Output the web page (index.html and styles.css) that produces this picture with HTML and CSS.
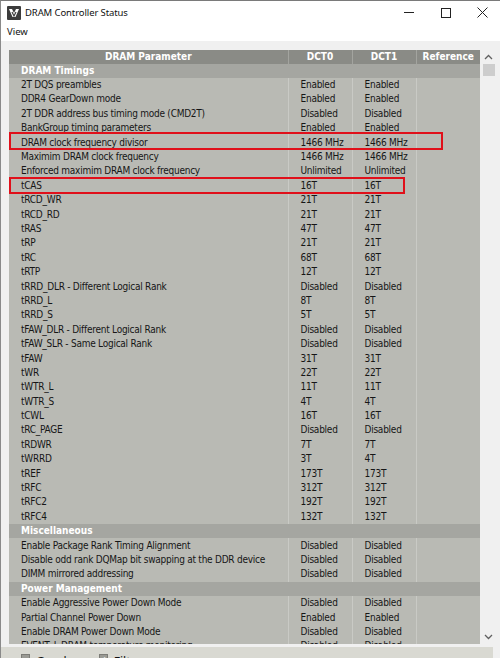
FILE: index.html
```html
<!DOCTYPE html>
<html lang="en">
<head>
  <meta charset="UTF-8">
  <title>DRAM Controller Status</title>
  <link rel="stylesheet" href="styles.css">
</head>
<body>

  <div class="window">
    <div class="titlebar">
      <svg class="app-icon" width="14" height="14" viewBox="0 0 14 14">
        <rect x="0" y="0" width="14" height="14" rx="1" fill="#3c3c3c"/>
        <path d="M2 3 L5 3 L7 7 L9 3 L12 3 L8.5 11 L5.5 11 Z" fill="#ffffff"/>
        <path d="M5 6 L7 10 L9 6" fill="none" stroke="#3c3c3c" stroke-width="1.2"/>
      </svg>
      <span class="title">DRAM Controller Status</span>
      <div class="controls">
        <span class="ctl"><span class="min-bar"></span></span>
        <span class="ctl"><span class="max-box"></span></span>
        <span class="ctl close">
          <svg width="11" height="11" viewBox="0 0 11 11">
            <path d="M0.5 0.5 L10.5 10.5 M10.5 0.5 L0.5 10.5" stroke="#222" stroke-width="1"/>
          </svg>
        </span>
      </div>
    </div>

    <div class="menubar"><span>View</span></div>

    <div class="client">
      <div class="grid-area">
        <div class="grid">
          <table class="params">
            <colgroup>
              <col class="c-name">
              <col class="c-val">
              <col class="c-val">
              <col class="c-val">
            </colgroup>
            <thead>
              <tr><th>DRAM Parameter</th><th>DCT0</th><th>DCT1</th><th>Reference</th></tr>
            </thead>
            <tbody>
              <tr class="group"><td colspan="4">DRAM Timings</td></tr>
              <tr><td>2T DQS preambles</td><td>Enabled</td><td>Enabled</td><td></td></tr>
              <tr><td>DDR4 GearDown mode</td><td>Enabled</td><td>Enabled</td><td></td></tr>
              <tr><td>2T DDR address bus timing mode (CMD2T)</td><td>Disabled</td><td>Disabled</td><td></td></tr>
              <tr><td>BankGroup timing parameters</td><td>Enabled</td><td>Enabled</td><td></td></tr>
              <tr><td>DRAM clock frequency divisor</td><td>1466 MHz</td><td>1466 MHz</td><td></td></tr>
              <tr><td>Maximim DRAM clock frequency</td><td>1466 MHz</td><td>1466 MHz</td><td></td></tr>
              <tr><td>Enforced maximim DRAM clock frequency</td><td>Unlimited</td><td>Unlimited</td><td></td></tr>
              <tr><td>tCAS</td><td>16T</td><td>16T</td><td></td></tr>
              <tr><td>tRCD_WR</td><td>21T</td><td>21T</td><td></td></tr>
              <tr><td>tRCD_RD</td><td>21T</td><td>21T</td><td></td></tr>
              <tr><td>tRAS</td><td>47T</td><td>47T</td><td></td></tr>
              <tr><td>tRP</td><td>21T</td><td>21T</td><td></td></tr>
              <tr><td>tRC</td><td>68T</td><td>68T</td><td></td></tr>
              <tr><td>tRTP</td><td>12T</td><td>12T</td><td></td></tr>
              <tr><td>tRRD_DLR - Different Logical Rank</td><td>Disabled</td><td>Disabled</td><td></td></tr>
              <tr><td>tRRD_L</td><td>8T</td><td>8T</td><td></td></tr>
              <tr><td>tRRD_S</td><td>5T</td><td>5T</td><td></td></tr>
              <tr><td>tFAW_DLR - Different Logical Rank</td><td>Disabled</td><td>Disabled</td><td></td></tr>
              <tr><td>tFAW_SLR - Same Logical Rank</td><td>Disabled</td><td>Disabled</td><td></td></tr>
              <tr><td>tFAW</td><td>31T</td><td>31T</td><td></td></tr>
              <tr><td>tWR</td><td>22T</td><td>22T</td><td></td></tr>
              <tr><td>tWTR_L</td><td>11T</td><td>11T</td><td></td></tr>
              <tr><td>tWTR_S</td><td>4T</td><td>4T</td><td></td></tr>
              <tr><td>tCWL</td><td>16T</td><td>16T</td><td></td></tr>
              <tr><td>tRC_PAGE</td><td>Disabled</td><td>Disabled</td><td></td></tr>
              <tr><td>tRDWR</td><td>7T</td><td>7T</td><td></td></tr>
              <tr><td>tWRRD</td><td>3T</td><td>4T</td><td></td></tr>
              <tr><td>tREF</td><td>173T</td><td>173T</td><td></td></tr>
              <tr><td>tRFC</td><td>312T</td><td>312T</td><td></td></tr>
              <tr><td>tRFC2</td><td>192T</td><td>192T</td><td></td></tr>
              <tr><td>tRFC4</td><td>132T</td><td>132T</td><td></td></tr>
              <tr class="group"><td colspan="4">Miscellaneous</td></tr>
              <tr><td>Enable Package Rank Timing Alignment</td><td>Disabled</td><td>Disabled</td><td></td></tr>
              <tr><td>Disable odd rank DQMap bit swapping at the DDR device</td><td>Disabled</td><td>Disabled</td><td></td></tr>
              <tr><td>DIMM mirrored addressing</td><td>Disabled</td><td>Disabled</td><td></td></tr>
              <tr class="group"><td colspan="4">Power Management</td></tr>
              <tr><td>Enable Aggressive Power Down Mode</td><td>Disabled</td><td>Disabled</td><td></td></tr>
              <tr><td>Partial Channel Power Down</td><td>Enabled</td><td>Enabled</td><td></td></tr>
              <tr><td>Enable DRAM Power Down Mode</td><td>Disabled</td><td>Disabled</td><td></td></tr>
              <tr><td>EVENT_L DRAM temperature monitoring</td><td>Disabled</td><td>Disabled</td><td></td></tr>
            </tbody>
          </table>

          <!-- highlight frames drawn over the grid -->
          <div class="mark mark-divisor"></div>
          <div class="mark mark-tcas"></div>
        </div>

        <div class="scrollbar">
          <svg class="arrow" width="9" height="14" viewBox="0 0 9 14">
            <path d="M1 9 L4.5 5.5 L8 9" fill="none" stroke="#606060" stroke-width="1.3"/>
          </svg>
          <span class="thumb"></span>
          <span class="track"></span>
          <svg class="arrow" width="9" height="14" viewBox="0 0 9 14">
            <path d="M1 5 L4.5 8.5 L8 5" fill="none" stroke="#606060" stroke-width="1.3"/>
          </svg>
        </div>
      </div>

      <div class="statusbar">
        <label class="opt"><span class="box"></span>Graphs</label>
        <label class="opt"><span class="box checked">&#x2713;</span>Filter</label>
      </div>
    </div>
  </div>

</body>
</html>
```

FILE: styles.css
```css
* {
  box-sizing: border-box;
}

body {
  margin: 0;
  background-color: #f0f0f0;
  overflow: hidden;
}

.window {
  width: 500px;
  height: 658px;
  display: flex;
  flex-direction: column;
  border-top: 1px solid #7a7a7a;
  border-left: 1px solid #8a8a8a;
  overflow: hidden;
  font-family: "DejaVu Sans Condensed", "DejaVu Sans", sans-serif;
}

/* title bar */
.titlebar {
  height: 23px;
  background-color: #ffffff;
  display: flex;
  align-items: center;
  padding-left: 6px;
  font-family: "Noto Sans", sans-serif;
  font-size: 9.5px;
  letter-spacing: -0.1px;
  color: #111;
}

.app-icon {
  margin-right: 4px;
}

.controls {
  margin-left: auto;
  display: flex;
}

.ctl {
  width: 37px;
  height: 22px;
  display: flex;
  justify-content: center;
  align-items: center;
}

.min-bar {
  width: 10px;
  height: 1px;
  background-color: #222;
}

.max-box {
  width: 10px;
  height: 10px;
  border: 1px solid #222;
}

.close {
  width: 36px;
}

/* menu */
.menubar {
  height: 17px;
  background-color: #ffffff;
  padding-left: 6px;
  font-family: "Noto Sans", sans-serif;
  font-size: 9.5px;
  line-height: 16px;
  color: #111;
}

.client {
  flex: 1;
  display: flex;
  flex-direction: column;
  padding-top: 9px;
  min-height: 0;
}

.grid-area {
  display: flex;
  height: 594px;
  padding-left: 8px;
}

.grid {
  position: relative;
  width: 471px;
  overflow: hidden;
  background-color: #b9bab4;
}

/* parameter table */
table.params {
  width: 471px;
  table-layout: fixed;
  border-collapse: collapse;
  font-size: 10px;
  letter-spacing: -0.25px;
  color: #161616;
}

.c-name { width: 279px; }
.c-val { width: 64px; }

.params th {
  height: 13.5px;
  padding: 0;
  background-color: #8a8b86;
  color: #ffffff;
  font-weight: bold;
  line-height: 13px;
  text-align: center;
  letter-spacing: 0;
  border-left: 1px solid #a3a49f;
}

.params th:first-child {
  border-left: none;
}

.params td {
  height: 14.4px;
  padding: 0 0 0 12px;
  line-height: 14px;
  white-space: nowrap;
  overflow: hidden;
  border-left: 1px solid #c9cac5;
}

.params td:first-child {
  border-left: none;
}

.params tr.group td {
  background-color: #a5a6a1;
  color: #ffffff;
  font-weight: bold;
  letter-spacing: 0;
}

/* red frames */
.mark {
  position: absolute;
  left: 0;
  border: 2px solid #e0101a;
}

.mark-divisor {
  top: 82px;
  width: 434px;
  height: 18px;
}

.mark-tcas {
  top: 127px;
  width: 396px;
  height: 17px;
}

/* scrollbar */
.scrollbar {
  width: 17px;
  display: flex;
  flex-direction: column;
  align-items: center;
  background-color: #f0f0f0;
}

.arrow {
  flex: none;
}

.thumb {
  width: 12px;
  height: 12px;
  background-color: #cdcdcd;
}

.track {
  flex: 1;
}

/* status bar */
.statusbar {
  margin-top: 3px;
  flex: 1;
  background-color: #d9d9d2;
  width: 492px;
  display: flex;
  gap: 22px;
  padding: 6px 0 0 20px;
  font-family: "Noto Sans", sans-serif;
  font-size: 12px;
  color: #111;
}

.opt {
  display: flex;
  align-items: flex-start;
  gap: 6px;
}

.box {
  width: 9px;
  height: 9px;
  margin-top: 1px;
  background-color: #9a9a94;
  border: 1px solid #7c7c77;
  font-size: 8px;
  line-height: 8px;
  color: #fff;
  text-align: center;
}
```
